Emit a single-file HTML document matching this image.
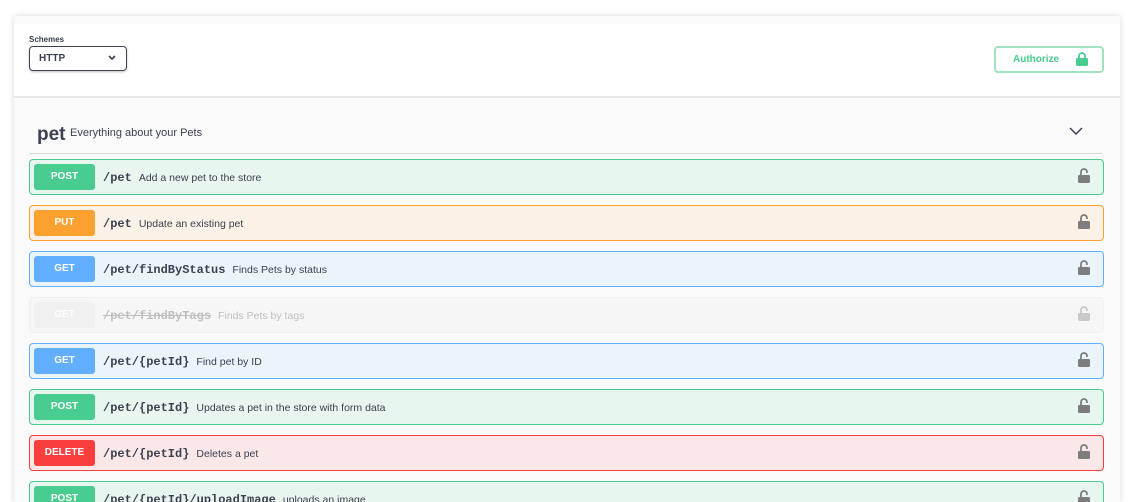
<!DOCTYPE html><html><head><style>
html,body{margin:0;width:1139px;height:502px;overflow:hidden}
body{background:#fff;font-family:"Liberation Sans",sans-serif;position:relative}
.card{position:absolute;left:14px;top:16px;width:1106px;height:486px;background:#fafafa;box-shadow:0 0 6px rgba(0,0,0,.15)}
.hdr{position:absolute;left:0;top:8px;width:1106px;height:72px;background:#fff;border-bottom:2px solid #e8e8e8}
.lbl{position:absolute;left:15px;top:11px;font-size:8px;font-weight:bold;color:#3b4151}
.sel{position:absolute;left:15px;top:22px;width:98px;height:25px;border:1px solid #41444e;border-radius:4px;box-shadow:0 1px 2px rgba(0,0,0,.25);font-size:10px;font-weight:bold;color:#3b4151;line-height:23px;padding-left:9px;box-sizing:border-box}
.sel svg{position:absolute;right:10px;top:8px}
.auth{position:absolute;left:980px;top:22px;width:110px;height:27px;border:2px solid #9fe3c0;border-radius:4px;box-sizing:border-box;color:#49cc90;font-size:10px;font-weight:bold;line-height:23px;padding-left:17px}
.auth svg{position:absolute;right:14px;top:4px}
.tag{position:absolute;left:23px;top:108px;font-size:19px;font-weight:bold;color:#3b4151}
.tagd{position:absolute;left:56px;top:111px;font-size:11px;color:#3b4151}
.line{position:absolute;left:15px;top:137px;width:1074px;height:1px;background:#d8d8d8}
.chev{position:absolute;left:1055px;top:110px}
.op{position:absolute;left:15px;width:1075px;height:36px;border:1px solid;border-radius:4px;box-sizing:border-box}
.b{position:absolute;left:4px;top:4px;width:61px;height:26px;border-radius:3px;color:#fff;font-size:10px;font-weight:bold;text-align:center;line-height:26px}
.p{position:absolute;left:73px;top:11px;font-family:"Liberation Mono",monospace;font-weight:bold;font-size:12px;color:#3b4151}
.d{font-family:"Liberation Sans",sans-serif;font-weight:normal;font-size:10.5px;margin-left:7px}
.lk{position:absolute;right:13px;top:7px}
.post{background:#e8f6f0;border-color:#49cc90}.post .b{background:#49cc90}
.put{background:#fbf1e6;border-color:#fca130}.put .b{background:#fca130}
.get{background:#ebf3fb;border-color:#61affe}.get .b{background:#61affe}
.del{background:#fae7e7;border-color:#f93e3e}.del .b{background:#f93e3e}
.dep{background:#f5f5f5;border-color:#ebebeb;opacity:.6}.dep .b{background:#ebebeb}.dep .p{color:#999;text-decoration:line-through}
</style></head><body>
<div class="card">
<div class="hdr">
<div class="lbl">Schemes</div>
<div class="sel">HTTP<svg width="8" height="6" viewBox="0 0 8 6"><path d="M1 1l3 3 3-3" stroke="#3b4151" stroke-width="1.6" fill="none"/></svg></div>
<div class="auth">Authorize<svg width="12" height="14" viewBox="0 0 12 14"><path d="M3 6V4a3 3 0 0 1 6 0v2" stroke="#49cc90" stroke-width="1.8" fill="none"/><rect x="0" y="6" width="12" height="8" rx="1.5" fill="#49cc90"/></svg></div>
</div>
<div class="tag">pet</div><div class="tagd">Everything about your Pets</div>
<div class="line"></div>
<svg class="chev" width="14" height="10" viewBox="0 0 14 10"><path d="M1 2l6 6 6-6" stroke="#3b4151" stroke-width="1.5" fill="none"/></svg>
</div>
<div style="position:absolute;left:14px;top:0">
<div class="op post" style="top:159px"><div class="b">POST</div><div class="p">/pet<span class="d">Add a new pet to the store</span></div><svg class="lk" width="12" height="16" viewBox="0 0 12 16"><path d="M3 8V5a3 3 0 0 1 6 0v1" stroke="#7d7d7d" stroke-width="1.8" fill="none"/><rect x="0" y="8" width="12" height="8" rx="1.5" fill="#7d7d7d"/></svg></div>
<div class="op put" style="top:205px"><div class="b">PUT</div><div class="p">/pet<span class="d">Update an existing pet</span></div><svg class="lk" width="12" height="16" viewBox="0 0 12 16"><path d="M3 8V5a3 3 0 0 1 6 0v1" stroke="#7d7d7d" stroke-width="1.8" fill="none"/><rect x="0" y="8" width="12" height="8" rx="1.5" fill="#7d7d7d"/></svg></div>
<div class="op get" style="top:251px"><div class="b">GET</div><div class="p">/pet/findByStatus<span class="d">Finds Pets by status</span></div><svg class="lk" width="12" height="16" viewBox="0 0 12 16"><path d="M3 8V5a3 3 0 0 1 6 0v1" stroke="#7d7d7d" stroke-width="1.8" fill="none"/><rect x="0" y="8" width="12" height="8" rx="1.5" fill="#7d7d7d"/></svg></div>
<div class="op dep" style="top:297px"><div class="b">GET</div><div class="p">/pet/findByTags<span class="d" style="text-decoration:none;display:inline-block">Finds Pets by tags</span></div><svg class="lk" width="12" height="16" viewBox="0 0 12 16"><path d="M3 8V5a3 3 0 0 1 6 0v1" stroke="#aaa" stroke-width="1.8" fill="none"/><rect x="0" y="8" width="12" height="8" rx="1.5" fill="#aaa"/></svg></div>
<div class="op get" style="top:343px"><div class="b">GET</div><div class="p">/pet/{petId}<span class="d">Find pet by ID</span></div><svg class="lk" width="12" height="16" viewBox="0 0 12 16"><path d="M3 8V5a3 3 0 0 1 6 0v1" stroke="#7d7d7d" stroke-width="1.8" fill="none"/><rect x="0" y="8" width="12" height="8" rx="1.5" fill="#7d7d7d"/></svg></div>
<div class="op post" style="top:389px"><div class="b">POST</div><div class="p">/pet/{petId}<span class="d">Updates a pet in the store with form data</span></div><svg class="lk" width="12" height="16" viewBox="0 0 12 16"><path d="M3 8V5a3 3 0 0 1 6 0v1" stroke="#7d7d7d" stroke-width="1.8" fill="none"/><rect x="0" y="8" width="12" height="8" rx="1.5" fill="#7d7d7d"/></svg></div>
<div class="op del" style="top:435px"><div class="b">DELETE</div><div class="p">/pet/{petId}<span class="d">Deletes a pet</span></div><svg class="lk" width="12" height="16" viewBox="0 0 12 16"><path d="M3 8V5a3 3 0 0 1 6 0v1" stroke="#7d7d7d" stroke-width="1.8" fill="none"/><rect x="0" y="8" width="12" height="8" rx="1.5" fill="#7d7d7d"/></svg></div>
<div class="op post" style="top:481px"><div class="b">POST</div><div class="p">/pet/{petId}/uploadImage<span class="d">uploads an image</span></div><svg class="lk" width="12" height="16" viewBox="0 0 12 16"><path d="M3 8V5a3 3 0 0 1 6 0v1" stroke="#7d7d7d" stroke-width="1.8" fill="none"/><rect x="0" y="8" width="12" height="8" rx="1.5" fill="#7d7d7d"/></svg></div>
</div>
</body></html>
